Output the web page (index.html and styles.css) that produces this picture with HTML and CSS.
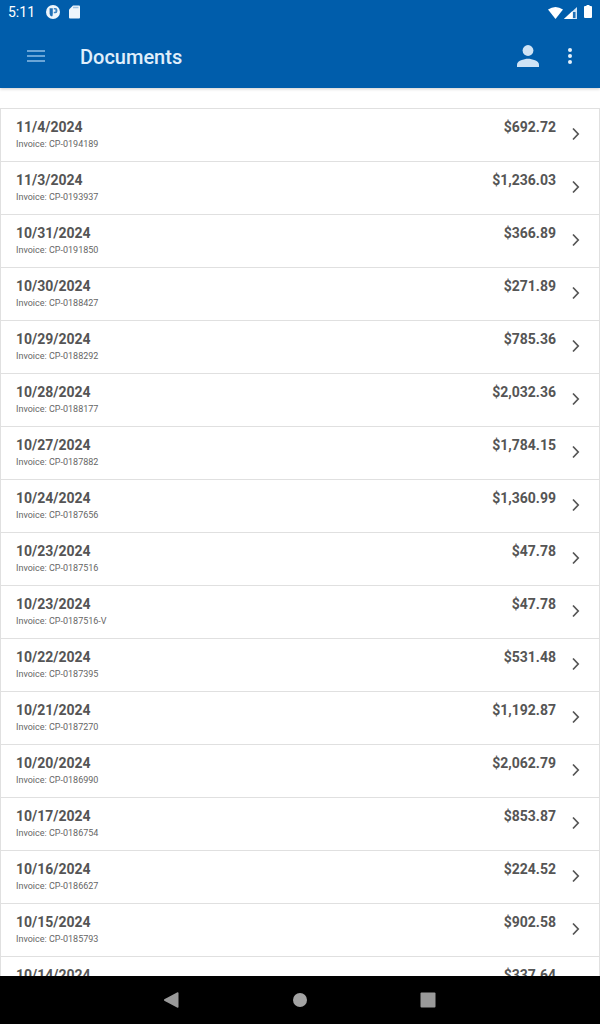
FILE: index.html
```
<!DOCTYPE html>
<html lang="en">
<head>
    <meta charset="utf-8">
    <meta name="viewport" content="width=device-width, initial-scale=1">
    <title>Documents</title>
    <link rel="stylesheet" href="styles.css">
</head>
<body>
    <svg class="defs" aria-hidden="true">
        <symbol id="chevron" viewBox="0 0 8 14">
            <path d="M1 1.5L6.2 7L1 12.5" fill="none" stroke="currentColor" stroke-width="1.7"/>
        </symbol>
    </svg>

    <header class="top">
        <div class="status-bar">
            <span class="clock">5:11</span>
            <svg class="status-icon" width="14" height="14" viewBox="0 0 14 14">
                <circle cx="7" cy="7" r="7" fill="#eef6fc"/>
                <path d="M3.6 3.2H6.8V8.5Q6.800 11.500 5.800 11.500Q3.600 10.800 3.600 8.500Z" fill="#1f70b7"/>
                <path d="M7.8 3H9.400a2 2 0 0 1 2 2v1.200a2 2 0 0 1-2 2H7.800V6.800H9.400V4.500H7.800Z" fill="#3f86c3"/>
            </svg>
            <svg class="status-icon" width="11" height="14" viewBox="0 0 11 14">
                <path d="M4 .5H10a1 1 0 0 1 1 1V12.500a1 1 0 0 1-1 1H1a1 1 0 0 1-1-1V4.500Z" fill="#eef6fc"/>
                <path d="M4 2.500H9.500" stroke="#9fc3e3" stroke-width="1.500"/>
            </svg>
            <div class="signals">
                <svg width="15" height="12" viewBox="0 0 15 12">
                    <path d="M0 2.500Q7.500-2.500 15 2.500L7.500 12Z" fill="#fff"/>
                </svg>
                <svg width="13" height="12" viewBox="0 0 13 12">
                    <path d="M0 12L13 0V12Z" fill="#cfe3f5"/>
                    <path d="M0 12L8.500 4V12Z" fill="#fff"/>
                    <path d="M9 5H11.500V11H9Z" fill="#1f70b7"/>
                </svg>
                <svg class="battery" width="8" height="13" viewBox="0 0 8 13">
                    <path d="M2.500 0H5.500V1H7a1 1 0 0 1 1 1V12a1 1 0 0 1-1 1H1a1 1 0 0 1-1-1V2a1 1 0 0 1 1-1H2.500Z" fill="#fff"/>
                </svg>
            </div>
        </div>
        <div class="toolbar">
            <button class="icon-button" type="button" aria-label="Menu">
                <svg width="18" height="14" viewBox="0 0 18 14">
                    <path d="M0 2H18M0 7H18M0 12H18" stroke="#8dbde6" stroke-width="1.600"/>
                </svg>
            </button>
            <h1 class="title">Documents</h1>
            <button class="icon-button" type="button" aria-label="Account">
                <svg width="22" height="22" viewBox="0 0 22 22">
                    <circle cx="11" cy="5.500" r="5.400" fill="#cfe3f5"/>
                    <path d="M0 22V19.500C0 16 7 13.800 11 13.800S22 16 22 19.500V22Z" fill="#cfe3f5"/>
                </svg>
            </button>
            <button class="icon-button more" type="button" aria-label="More options">
                <svg width="4" height="16" viewBox="0 0 4 16">
                    <g fill="#e4f0fa"><circle cx="2" cy="2" r="2"/><circle cx="2" cy="8" r="2"/><circle cx="2" cy="14" r="2"/></g>
                </svg>
            </button>
        </div>
    </header>

    <main class="content">
        <ul class="documents">
            <li><a class="row" href="#"><span class="info"><b class="date">11/4/2024</b><span class="invoice">Invoice: CP-0194189</span></span><b class="amount">$692.72</b><svg class="chevron"><use href="#chevron"/></svg></a></li>
            <li><a class="row" href="#"><span class="info"><b class="date">11/3/2024</b><span class="invoice">Invoice: CP-0193937</span></span><b class="amount">$1,236.03</b><svg class="chevron"><use href="#chevron"/></svg></a></li>
            <li><a class="row" href="#"><span class="info"><b class="date">10/31/2024</b><span class="invoice">Invoice: CP-0191850</span></span><b class="amount">$366.89</b><svg class="chevron"><use href="#chevron"/></svg></a></li>
            <li><a class="row" href="#"><span class="info"><b class="date">10/30/2024</b><span class="invoice">Invoice: CP-0188427</span></span><b class="amount">$271.89</b><svg class="chevron"><use href="#chevron"/></svg></a></li>
            <li><a class="row" href="#"><span class="info"><b class="date">10/29/2024</b><span class="invoice">Invoice: CP-0188292</span></span><b class="amount">$785.36</b><svg class="chevron"><use href="#chevron"/></svg></a></li>
            <li><a class="row" href="#"><span class="info"><b class="date">10/28/2024</b><span class="invoice">Invoice: CP-0188177</span></span><b class="amount">$2,032.36</b><svg class="chevron"><use href="#chevron"/></svg></a></li>
            <li><a class="row" href="#"><span class="info"><b class="date">10/27/2024</b><span class="invoice">Invoice: CP-0187882</span></span><b class="amount">$1,784.15</b><svg class="chevron"><use href="#chevron"/></svg></a></li>
            <li><a class="row" href="#"><span class="info"><b class="date">10/24/2024</b><span class="invoice">Invoice: CP-0187656</span></span><b class="amount">$1,360.99</b><svg class="chevron"><use href="#chevron"/></svg></a></li>
            <li><a class="row" href="#"><span class="info"><b class="date">10/23/2024</b><span class="invoice">Invoice: CP-0187516</span></span><b class="amount">$47.78</b><svg class="chevron"><use href="#chevron"/></svg></a></li>
            <li><a class="row" href="#"><span class="info"><b class="date">10/23/2024</b><span class="invoice">Invoice: CP-0187516-V</span></span><b class="amount">$47.78</b><svg class="chevron"><use href="#chevron"/></svg></a></li>
            <li><a class="row" href="#"><span class="info"><b class="date">10/22/2024</b><span class="invoice">Invoice: CP-0187395</span></span><b class="amount">$531.48</b><svg class="chevron"><use href="#chevron"/></svg></a></li>
            <li><a class="row" href="#"><span class="info"><b class="date">10/21/2024</b><span class="invoice">Invoice: CP-0187270</span></span><b class="amount">$1,192.87</b><svg class="chevron"><use href="#chevron"/></svg></a></li>
            <li><a class="row" href="#"><span class="info"><b class="date">10/20/2024</b><span class="invoice">Invoice: CP-0186990</span></span><b class="amount">$2,062.79</b><svg class="chevron"><use href="#chevron"/></svg></a></li>
            <li><a class="row" href="#"><span class="info"><b class="date">10/17/2024</b><span class="invoice">Invoice: CP-0186754</span></span><b class="amount">$853.87</b><svg class="chevron"><use href="#chevron"/></svg></a></li>
            <li><a class="row" href="#"><span class="info"><b class="date">10/16/2024</b><span class="invoice">Invoice: CP-0186627</span></span><b class="amount">$224.52</b><svg class="chevron"><use href="#chevron"/></svg></a></li>
            <li><a class="row" href="#"><span class="info"><b class="date">10/15/2024</b><span class="invoice">Invoice: CP-0185793</span></span><b class="amount">$902.58</b><svg class="chevron"><use href="#chevron"/></svg></a></li>
            <li><a class="row" href="#"><span class="info"><b class="date">10/14/2024</b></span><b class="amount">$337.64</b><svg class="chevron"><use href="#chevron"/></svg></a></li>
        </ul>
    </main>

    <nav class="nav-bar">
        <button class="nav-button" type="button" aria-label="Back">
            <svg width="16" height="16" viewBox="0 0 16 16"><path d="M.3 7.300L13.500 .2Q14.500 0 14.500 1V15Q14.500 16 13.500 15.800L.3 8.700Q-.5 8 .3 7.300Z" fill="#999"/></svg>
        </button>
        <button class="nav-button" type="button" aria-label="Home">
            <svg width="16" height="16" viewBox="0 0 16 16"><circle cx="8" cy="8" r="7" fill="#a3a3a3"/></svg>
        </button>
        <button class="nav-button" type="button" aria-label="Recent apps">
            <svg width="16" height="16" viewBox="0 0 16 16"><rect x=".5" y=".5" width="15" height="15" rx="1" fill="#999"/></svg>
        </button>
    </nav>
</body>
</html>
```
FILE: styles.css
```
* { box-sizing: border-box; }
body { margin: 0; height: 100vh; display: flex; flex-direction: column; background: #fff; color: #555; font-family: Roboto, "Liberation Sans", sans-serif; }
button { padding: 0; border: none; background: none; cursor: pointer; }
svg { display: block; flex: none; }
.defs { display: none; }

/* status bar + toolbar */
.top { background: #005dab; color: #fff; box-shadow: 0 1px 3px rgba(0, 0, 0, 0.2); }
.status-bar { display: flex; align-items: center; height: 24px; padding: 0 8px; }
.clock { font-size: 14px; line-height: 24px; margin-right: 11px; }
.status-icon { margin-right: 9px; }
.signals { display: flex; align-items: flex-end; gap: 1px; height: 14px; margin-left: auto; }
.battery { margin-left: 6px; align-self: flex-start; }
.toolbar { display: flex; align-items: center; height: 64px; padding: 0 14px 0 20px; }
.icon-button { display: flex; align-items: center; justify-content: center; width: 32px; height: 32px; }
.more { margin-left: 10px; }
.title { flex: 1; margin: 0 0 0 28px; font-size: 20px; line-height: 26px; padding-top: 2px; font-weight: 500; color: #e0effb; }

/* document list */
.content { flex: 1; min-height: 0; overflow: hidden; padding-top: 20px; }
.documents { list-style: none; margin: 0; padding: 0; border: 1px solid #e0e0e0; }
.row { display: flex; align-items: flex-start; height: 53px; padding: 9px 19px 0 15px; border-bottom: 1px solid #e0e0e0; color: inherit; text-decoration: none; }
.info { flex: 1; display: flex; flex-direction: column; }
.date, .amount { font-size: 14px; line-height: 18px; font-weight: 700; }
.invoice { font-size: 9px; line-height: 16px; color: #666; }
.chevron { width: 8px; height: 14px; margin: 9px 0 0 16px; }

/* system navigation */
.nav-bar { display: flex; align-items: center; justify-content: center; gap: 80px; height: 48px; background: #000; }
.nav-button { display: flex; align-items: center; justify-content: center; width: 48px; height: 48px; }
```
